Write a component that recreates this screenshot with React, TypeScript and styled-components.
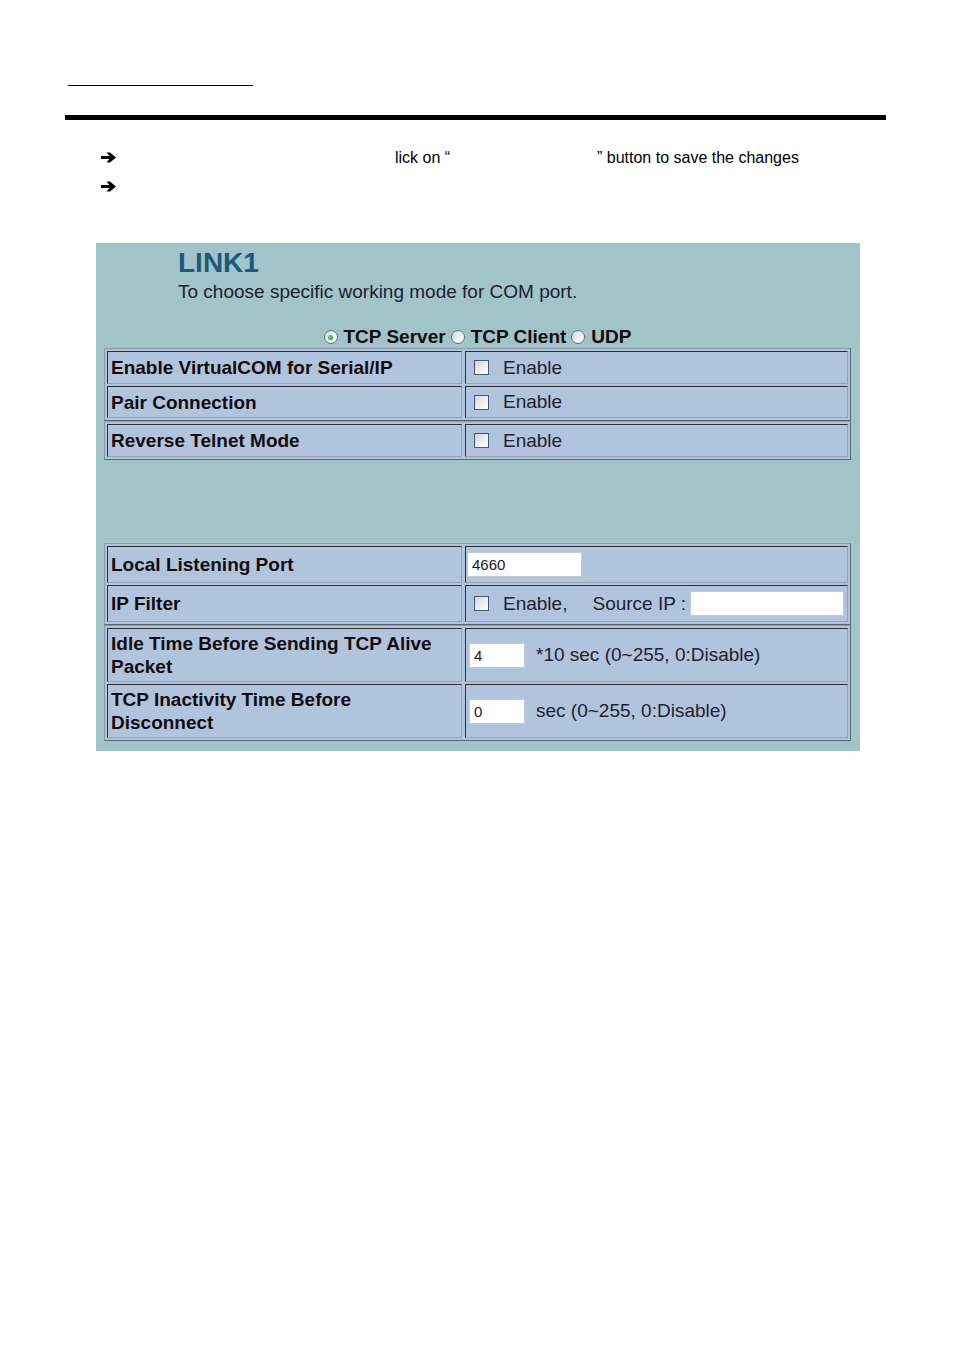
import React from "react";
import styled, { createGlobalStyle } from "styled-components";

const GlobalStyle = createGlobalStyle`
  html, body { margin: 0; padding: 0; background: #ffffff; }
  body { font-family: "Liberation Sans", Arial, sans-serif; }
  * { box-sizing: border-box; }
`;

const Page = styled.div`
  width: 954px;
  min-height: 1350px;
  padding-top: 85px;
  background: #ffffff;
`;

const ShortRule = styled.div`
  margin-left: 68px;
  width: 185px;
  height: 0;
  border-top: 1px solid #000;
`;

const DoubleRule = styled.div`
  margin: 29px 0 0 65px;
  width: 821px;
  height: 2px;
  background: #ffffff;
  border-top: 1px solid #000;
  border-bottom: 4px solid #000;
`;

const BulletList = styled.div`
  margin-top: 23px;
  padding-left: 101px;
`;

const BulletRow = styled.div`
  display: flex;
  align-items: center;
  height: 29px;
  font-size: 16px;
  color: #000;
`;

const ArrowIcon = styled.svg`
  width: 15px;
  height: 11px;
  flex: none;
`;

const Segment = styled.span<{ $width?: number; $indent?: number }>`
  display: inline-block;
  white-space: nowrap;
  ${(p) => (p.$width ? `width: ${p.$width}px;` : "")}
  ${(p) => (p.$indent ? `margin-left: ${p.$indent}px;` : "")}
`;

const Panel = styled.div`
  margin: 42px 0 0 96px;
  width: 764px;
  background: #a0c4c8;
  padding: 0 9px 10px 8px;
`;

const Header = styled.div`
  margin-left: 74px;
`;

const Title = styled.div`
  padding-top: 6px;
  font-size: 28px;
  line-height: 28px;
  font-weight: bold;
  color: #1b5a7e;
`;

const Subtitle = styled.div`
  margin-top: 4px;
  font-size: 19px;
  line-height: 22px;
  color: #231c30;
`;

const RadioRow = styled.div`
  margin-top: 23px;
  display: flex;
  justify-content: center;
  align-items: center;
  height: 22px;
  font-size: 19px;
  font-weight: bold;
  color: #140c0c;
`;

const RadioItem = styled.span`
  display: inline-flex;
  align-items: center;
  gap: 6px;
  & + & { margin-left: 5px; }
`;

const RadioCircle = styled.span<{ $checked?: boolean }>`
  position: relative;
  width: 14px;
  height: 14px;
  border-radius: 50%;
  border: 1px solid #5c7488;
  background: linear-gradient(135deg, #cfd3d6 0%, #f4f4f4 60%, #ffffff 100%);
  flex: none;
  &::after {
    content: "";
    display: ${(p) => (p.$checked ? "block" : "none")};
    position: absolute;
    left: 3.5px;
    top: 3.5px;
    width: 5px;
    height: 5px;
    border-radius: 50%;
    background: radial-gradient(circle at 40% 40%, #7fe07f 0%, #24a03a 70%);
  }
`;

const Table = styled.div<{ $mt?: number }>`
  margin-top: ${(p) => p.$mt ?? 0}px;
  border: 1px solid;
  border-color: #8c99a5 #5d656d #5d656d #8c99a5;
  padding: 2px;
  background: #b0c4de;
  display: grid;
  row-gap: 2px;
`;

const Row = styled.div<{ $h: number }>`
  display: grid;
  grid-template-columns: 355px 383px;
  column-gap: 3px;
  height: ${(p) => p.$h}px;
`;

const Cell = styled.div`
  border: 1px solid;
  border-color: #2e2e2e #98a2b0 #98a2b0 #2e2e2e;
  background: #b0c4de;
  display: flex;
  align-items: center;
`;

const LabelCell = styled(Cell)`
  padding-left: 3px;
  font-size: 19px;
  line-height: 23px;
  font-weight: bold;
  color: #140c0c;
`;

const ValueCell = styled(Cell)<{ $pl?: number }>`
  padding-left: ${(p) => p.$pl ?? 7}px;
  font-size: 19px;
  color: #22222f;
  white-space: nowrap;
`;

const CheckBox = styled.span`
  width: 15px;
  height: 15px;
  border: 1px solid #3f5b78;
  background: linear-gradient(135deg, #d2d2d2 0%, #efefef 55%, #ffffff 100%);
  flex: none;
  margin-right: 14px;
  margin-left: 1px;
`;

const TextBox = styled.input<{ $w: number; $ml?: number; $mr?: number }>`
  width: ${(p) => p.$w}px;
  height: 25px;
  margin: 0 ${(p) => p.$mr ?? 0}px 0 ${(p) => p.$ml ?? 0}px;
  padding: 0 0 0 4px;
  border: 1px solid #c2cad2;
  background: #ffffff;
  font-family: "Liberation Sans", Arial, sans-serif;
  font-size: 15px;
  color: #1c1430;
  outline: none;
  flex: none;
`;

const Label = styled.span<{ $ml?: number }>`
  margin-left: ${(p) => p.$ml ?? 0}px;
`;

const Arrow = () => (
  <ArrowIcon viewBox="0 0 15 11">
    <path d="M0 4 H8.5 L5.5 0.5 H9 L15 5.5 L9 10.5 H5.5 L8.5 7 H0 Z" fill="#000" />
  </ArrowIcon>
);

export default function App() {
  return (
    <>
      <GlobalStyle />
      <Page>
        <ShortRule />
        <DoubleRule />
        <BulletList>
          <BulletRow>
            <Arrow />
            <Segment $indent={279} $width={202}>lick on “</Segment>
            <Segment>” button to save the changes</Segment>
          </BulletRow>
          <BulletRow>
            <Arrow />
          </BulletRow>
        </BulletList>

        <Panel>
          <Header>
            <Title>LINK1</Title>
            <Subtitle>To choose specific working mode for COM port.</Subtitle>
          </Header>

          <RadioRow>
            <RadioItem>
              <RadioCircle $checked />
              TCP Server
            </RadioItem>
            <RadioItem>
              <RadioCircle />
              TCP Client
            </RadioItem>
            <RadioItem>
              <RadioCircle />
              UDP
            </RadioItem>
          </RadioRow>

          <Table>
            <Row $h={33}>
              <LabelCell>Enable VirtualCOM for Serial/IP</LabelCell>
              <ValueCell>
                <CheckBox />
                Enable
              </ValueCell>
            </Row>
            <Row $h={32}>
              <LabelCell>Pair Connection</LabelCell>
              <ValueCell>
                <CheckBox />
                Enable
              </ValueCell>
            </Row>
          </Table>
          <Table>
            <Row $h={33}>
              <LabelCell>Reverse Telnet Mode</LabelCell>
              <ValueCell>
                <CheckBox />
                Enable
              </ValueCell>
            </Row>
          </Table>

          <Table $mt={83}>
            <Row $h={37}>
              <LabelCell>Local Listening Port</LabelCell>
              <ValueCell $pl={1}>
                <TextBox $w={115} readOnly value="4660" />
              </ValueCell>
            </Row>
            <Row $h={37}>
              <LabelCell>IP Filter</LabelCell>
              <ValueCell>
                <CheckBox />
                Enable,
                <Label $ml={25}>Source IP :</Label>
                <TextBox $w={154} $ml={4} readOnly value="" />
              </ValueCell>
            </Row>
          </Table>
          <Table>
            <Row $h={54}>
              <LabelCell>
                Idle Time Before Sending TCP Alive
                <br />
                Packet
              </LabelCell>
              <ValueCell $pl={3}>
                <TextBox $w={56} $mr={11} readOnly value="4" />
                *10 sec (0~255, 0:Disable)
              </ValueCell>
            </Row>
            <Row $h={54}>
              <LabelCell>
                TCP Inactivity Time Before
                <br />
                Disconnect
              </LabelCell>
              <ValueCell $pl={3}>
                <TextBox $w={56} $mr={11} readOnly value="0" />
                sec (0~255, 0:Disable)
              </ValueCell>
            </Row>
          </Table>
        </Panel>
      </Page>
    </>
  );
}
